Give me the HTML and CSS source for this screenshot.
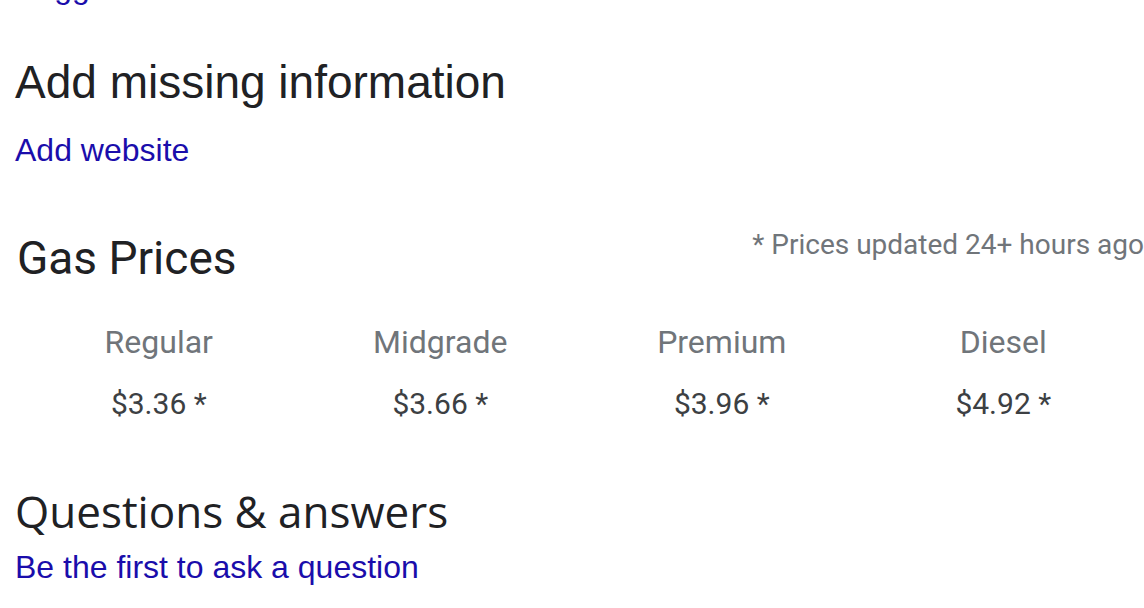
FILE: index.html
```html
<!DOCTYPE html>
<html lang="en">
<head>
<meta charset="utf-8">
<title>Gas station details</title>
<link rel="stylesheet" href="styles.css">
</head>
<body>
<div class="page">
  <a class="link suggest" href="#">Suggest an edit</a>

  <section class="missing">
    <h2 class="title-arial">Add missing information</h2>
    <a class="link add-website" href="#">Add website</a>
  </section>

  <section class="gas">
    <div class="gas-head">
      <h2 class="gas-title">Gas Prices</h2>
      <div class="gas-note">* Prices updated 24+ hours ago</div>
    </div>
    <div class="gas-grid">
      <div class="gas-col">
        <div class="gas-label">Regular</div>
        <div class="gas-price">$3.36 *</div>
      </div>
      <div class="gas-col">
        <div class="gas-label">Midgrade</div>
        <div class="gas-price">$3.66 *</div>
      </div>
      <div class="gas-col">
        <div class="gas-label">Premium</div>
        <div class="gas-price">$3.96 *</div>
      </div>
      <div class="gas-col">
        <div class="gas-label">Diesel</div>
        <div class="gas-price">$4.92 *</div>
      </div>
    </div>
  </section>

  <section class="qa">
    <h2 class="qa-title">Questions &amp; answers</h2>
    <a class="link ask" href="#">Be the first to ask a question</a>
  </section>
</div>
</body>
</html>
```

FILE: styles.css
```css
html, body {
  margin: 0;
  padding: 0;
  background: #ffffff;
  overflow: hidden;
}

.page {
  width: 1144px;
  height: 608px;
  overflow: hidden;
  padding-left: 15px;
  box-sizing: border-box;
  font-family: "Liberation Sans", Arial, sans-serif;
  color: #202124;
}

.link {
  display: block;
  width: max-content;
  font-family: "Liberation Sans", Arial, sans-serif;
  font-size: 32px;
  line-height: 40px;
  color: #1a0dab;
  text-decoration: none;
}

.suggest {
  line-height: 32px;
  margin-top: -29px;
}

.missing {
  margin-top: 51px;
}

.title-arial {
  margin: 0;
  font-family: "Liberation Sans", Arial, sans-serif;
  font-weight: 400;
  font-size: 46px;
  line-height: 56px;
  color: #202124;
}

.add-website {
  margin-top: 20px;
}

.gas {
  margin-top: 56px;
  font-family: Roboto, "Liberation Sans", sans-serif;
}

.gas-head {
  display: flex;
  justify-content: space-between;
  align-items: flex-start;
}

.gas-title {
  margin: 4px 0 0 2px;
  font-family: Roboto, sans-serif;
  font-weight: 400;
  font-size: 46px;
  line-height: 56px;
  color: #202124;
}

.gas-note {
  margin-top: 1px;
  font-family: Roboto, sans-serif;
  font-size: 28px;
  line-height: 36px;
  color: #70757a;
  white-space: nowrap;
}

.gas-grid {
  margin-top: 36px;
  margin-left: 3px;
  display: grid;
  grid-template-columns: repeat(4, 1fr);
}

.gas-col {
  text-align: center;
}

.gas-label {
  font-size: 32px;
  line-height: 40px;
  color: #70757a;
}

.gas-price {
  margin-top: 22px;
  font-size: 30px;
  line-height: 40px;
  color: #3c4043;
}

.qa {
  margin-top: 59px;
}

.qa-title {
  margin: 0;
  font-family: "Open Sans", sans-serif;
  font-weight: 400;
  font-size: 44px;
  line-height: 56px;
  color: #202124;
}

.ask {
  margin-top: 8px;
}
```
